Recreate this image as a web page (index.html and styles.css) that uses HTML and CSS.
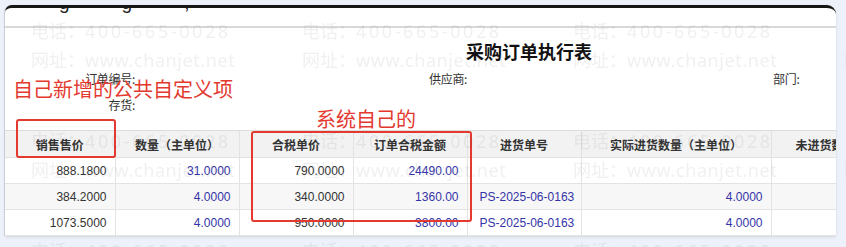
FILE: index.html
```html
<!DOCTYPE html>
<html lang="zh-CN">
<head>
<meta charset="utf-8">
<title>采购订单执行表</title>
<link rel="stylesheet" href="styles.css">
</head>
<body>
<div class="card">
  <div class="cut"><div class="ghost"><span>g</span><span>g</span><span>,</span></div></div>
  <h1 class="title">采购订单执行表</h1>
  <div class="meta">
    <span class="lab r">订单编号:</span><span></span><span class="lab">供应商:</span><span class="lab">部门:</span>
    <span class="lab r">存货:</span><span></span><span></span><span></span>
  </div>
  <table class="grid">
    <colgroup>
      <col class="c1"><col class="c2"><col class="c3"><col class="c4"><col class="c5"><col class="c6"><col class="c7">
    </colgroup>
    <thead>
      <tr><th>销售售价</th><th>数量（主单位）</th><th>合税单价</th><th>订单合税金额</th><th>进货单号</th><th>实际进货数量（主单位）</th><th class="l">未进货数量（主单位）</th></tr>
    </thead>
    <tbody>
      <tr><td>888.1800</td><td class="b">31.0000</td><td>790.0000</td><td class="b">24490.00</td><td></td><td></td><td></td></tr>
      <tr class="alt"><td>384.2000</td><td class="b">4.0000</td><td>340.0000</td><td class="b">1360.00</td><td class="b l">PS-2025-06-0163</td><td class="b">4.0000</td><td></td></tr>
      <tr><td>1073.5000</td><td class="b">4.0000</td><td>950.0000</td><td class="b">3800.00</td><td class="b l">PS-2025-06-0163</td><td class="b">4.0000</td><td></td></tr>
    </tbody>
  </table>
  <div class="note note1">自己新增的公共自定义项</div>
  <div class="note note2">系统自己的</div>
  <div class="box box1"></div>
  <div class="box box2"></div>
</div>
<div class="wm">
  <div class="wc"><div>电话：<span class="d">400-665-0028</span></div><div>网址：<span class="u">www.chanjet.net</span></div></div>
  <div class="wc"><div>电话：<span class="d">400-665-0028</span></div><div>网址：<span class="u">www.chanjet.net</span></div></div>
  <div class="wc"><div>电话：<span class="d">400-665-0028</span></div><div>网址：<span class="u">www.chanjet.net</span></div></div>
  <div class="wc"><div>电话：<span class="d">400-665-0028</span></div><div>网址：<span class="u">www.chanjet.net</span></div></div>
  <div class="wc"><div>电话：<span class="d">400-665-0028</span></div><div>网址：<span class="u">www.chanjet.net</span></div></div>
  <div class="wc"><div>电话：<span class="d">400-665-0028</span></div><div>网址：<span class="u">www.chanjet.net</span></div></div>
  <div class="wc"><div>电话：<span class="d">400-665-0028</span></div><div>网址：<span class="u">www.chanjet.net</span></div></div>
  <div class="wc"><div>电话：<span class="d">400-665-0028</span></div><div>网址：<span class="u">www.chanjet.net</span></div></div>
  <div class="wc"><div>电话：<span class="d">400-665-0028</span></div><div>网址：<span class="u">www.chanjet.net</span></div></div>
  <div class="wc"><div>电话：<span class="d">400-665-0028</span></div><div>网址：<span class="u">www.chanjet.net</span></div></div>
  <div class="wc"><div>电话：<span class="d">400-665-0028</span></div><div>网址：<span class="u">www.chanjet.net</span></div></div>
  <div class="wc"><div>电话：<span class="d">400-665-0028</span></div><div>网址：<span class="u">www.chanjet.net</span></div></div>
</div>
</body>
</html>
```
FILE: styles.css
```css
html, body {
  margin: 0;
  padding: 0;
}
body {
  background: #edf2fa;
  font-family: "Liberation Sans", "Noto Sans CJK SC", sans-serif;
  color: #333;
  overflow: hidden;
  width: 846px;
  height: 247px;
}
.card {
  position: relative;
  margin: 5px 0 0 5px;
  width: 831px;
  background: #fff;
  border-top: 3px solid #161616;
  border-radius: 7px 9px 0 0;
  box-shadow: 0 1px 3px rgba(0, 0, 0, 0.12), -1px 0 0 #d4d8e0;
  overflow: hidden;
}
.cut {
  height: 18px;
  overflow: hidden;
  clip-path: inset(0);
  border-bottom: 2px solid #d8d8d8;
  box-shadow: 0 1px 2px rgba(0, 0, 0, 0.08);
}
.ghost {
  display: flex;
  gap: 52px;
  padding-left: 54px;
  transform: translateY(-15px);
  font-family: "Liberation Sans", sans-serif;
  font-size: 19px;
  line-height: 19px;
  color: #222;
}
.title {
  margin: 0;
  height: 30px;
  padding: 8px 0 0 461px;
  line-height: 30px;
  text-align: left;
  font-family: "Noto Sans CJK SC", sans-serif;
  font-size: 18px;
  font-weight: 700;
  color: #111;
}
.meta {
  display: grid;
  grid-template-columns: 130px 294px 344px 1fr;
  grid-auto-rows: 26px;
  margin-bottom: 12px;
}
.lab {
  font-family: "Noto Sans CJK SC", sans-serif;
  font-size: 12px;
  line-height: 26px;
  color: #333;
  letter-spacing: -0.3px;
}
.lab.r {
  text-align: right;
}
.grid {
  table-layout: fixed;
  border-collapse: collapse;
  width: 936px;
  font-size: 12px;
}
.c1 { width: 110px; }
.c2 { width: 124px; }
.c3 { width: 114px; }
.c4 { width: 114px; }
.c5 { width: 114px; }
.c6 { width: 190px; }
.c7 { width: 170px; }
.grid th {
  height: 26px;
  background: #f2f2f2;
  border-top: 1px solid #dcdcdc;
  border-bottom: 1px solid #e2e2e2;
  border-left: 1px solid #e2e2e2;
  font-family: "Noto Sans CJK SC", sans-serif;
  font-weight: 700;
  color: #333;
  text-align: center;
  padding: 0;
  white-space: nowrap;
  overflow: hidden;
}
.grid th:first-child, .grid td:first-child {
  border-left: 0;
}
.grid th.l {
  text-align: left;
  padding-left: 24px;
}
.grid td {
  height: 25px;
  border-bottom: 1px solid #e3e3e3;
  border-left: 1px solid #e3e3e3;
  text-align: right;
  padding: 0 8px 0 6px;
  color: #333;
  white-space: nowrap;
}
.grid tr.alt td {
  background: #f7f7f7;
}
.grid td.b {
  color: #3434a8;
}
.grid td.l {
  text-align: left;
  padding-left: 12px;
}
.note {
  position: absolute;
  font-family: "Noto Sans CJK SC", sans-serif;
  font-size: 20px;
  line-height: 22px;
  color: #e3392f;
  white-space: nowrap;
}
.note1 {
  left: 8px;
  top: 70px;
}
.note2 {
  left: 311px;
  top: 100px;
}
.box {
  position: absolute;
  border: 2px solid #e3392f;
  border-radius: 3px;
}
.box1 {
  left: 11px;
  top: 111px;
  width: 96px;
  height: 35px;
}
.box2 {
  left: 246px;
  top: 123px;
  width: 217px;
  height: 87px;
}
.wm {
  position: fixed;
  left: 0;
  top: 0;
  width: 1200px;
  height: 400px;
  pointer-events: none;
  display: grid;
  grid-template-columns: repeat(4, 271px);
  grid-auto-rows: 110px;
  padding: 17px 0 0 31px;
  font-family: "Noto Sans", "Noto Sans CJK SC", sans-serif;
  font-size: 18px;
  line-height: 29px;
  color: rgba(90, 90, 90, 0.09);
  white-space: nowrap;
}
.wm .d {
  letter-spacing: 2.6px;
}
.wm .u {
  letter-spacing: 0.6px;
}
```
